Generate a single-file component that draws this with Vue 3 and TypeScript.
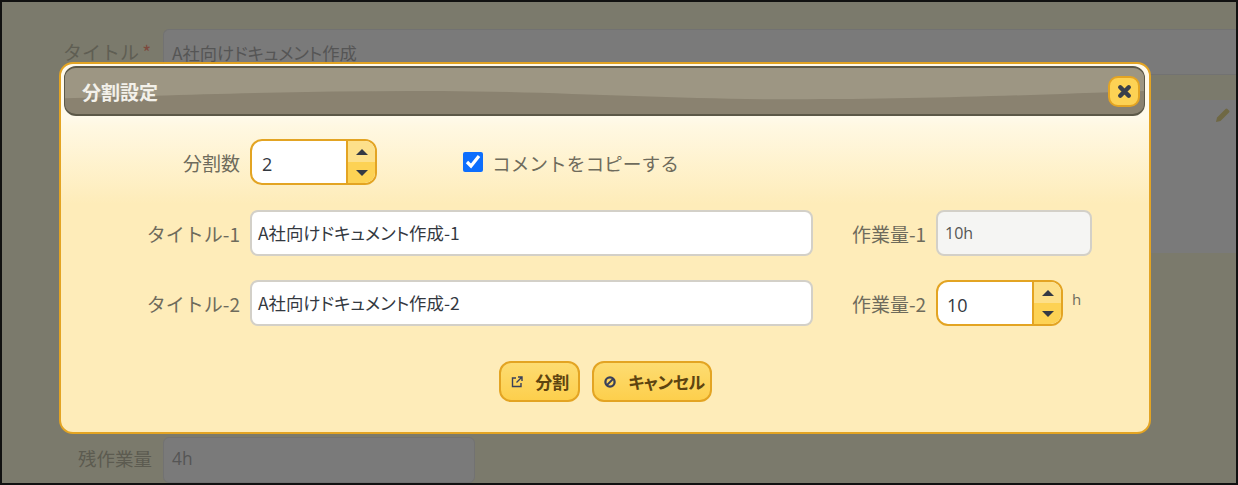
<script setup lang="ts">
const rows = [
  { title: 'タイトル-1', value: 'A社向けドキュメント作成-1', workLabel: '作業量-1' },
  { title: 'タイトル-2', value: 'A社向けドキュメント作成-2', workLabel: '作業量-2' },
]
</script>

<template>
  <div class="page">
    <div class="backdrop">
      <div class="bg-row first">
        <span class="bg-label">タイトル<em>*</em></span>
        <div class="bg-input">A社向けドキュメント作成</div>
      </div>
      <div class="bg-area">
        <svg class="pencil" viewBox="0 0 14 14" width="14" height="14"><path d="M0 14L1 9.500 9.500 1a1.400 1.400 0 0 1 2 0L13 2.500a1.400 1.400 0 0 1 0 2L4.500 13z" fill="#6f6844" /></svg>
      </div>
      <div class="bg-spacer"></div>
      <div class="bg-row last">
        <span class="bg-label rest">残作業量</span>
        <div class="bg-input small">4h</div>
      </div>
    </div>

    <section class="modal">
      <header class="head">
        <svg class="gloss" viewBox="0 0 1081 50" preserveAspectRatio="none"><path d="M0 33C100 30 250 24 377 25S600 34 728 34 950 30 1081 25V0H0Z" fill="#9d9683" /></svg>
        <span class="head-title">分割設定</span>
        <button class="close" type="button" aria-label="閉じる">
          <svg viewBox="0 0 16 16" width="17" height="17"><path d="M4 4l8 8M12 4l-8 8" stroke="#3a3f4b" stroke-width="4.200" stroke-linecap="round" /></svg>
        </button>
      </header>
      <div class="body">
        <div class="row top">
          <label class="lab">分割数</label>
          <div class="spin">
            <span class="spin-val first-val">2</span>
            <span class="arrows">
              <i class="up"></i>
              <i class="down"></i>
            </span>
          </div>
          <label class="check">
            <input type="checkbox" checked />
            <span>コメントをコピーする</span>
          </label>
        </div>
        <div v-for="(r, i) in rows" :key="r.title" class="row">
          <label class="lab">{{ r.title }}</label>
          <div class="field">{{ r.value }}</div>
          <label class="lab2">{{ r.workLabel }}</label>
          <div v-if="i === 0" class="field readonly">10h</div>
          <template v-else>
            <div class="spin">
              <span class="spin-val">10</span>
              <span class="arrows">
                <i class="up"></i>
                <i class="down"></i>
              </span>
            </div>
            <span class="unit">h</span>
          </template>
        </div>
        <div class="actions">
          <button class="btn" type="button">
            <svg viewBox="0 0 14 14" width="14" height="14" fill="none" stroke="#39405a" stroke-width="1.400"><path d="M6 3H2.500v8.500H11V8M8 2h4v4M12 2L6.500 7.500" /></svg>
            <span>分割</span>
          </button>
          <button class="btn cancel" type="button">
            <svg viewBox="0 0 14 14" width="14" height="14" fill="none" stroke="#39405a" stroke-width="2.300"><circle cx="7" cy="7" r="4.600" /><path d="M4 10l6-6" stroke-width="1.800" /></svg>
            <span>キャンセル</span>
          </button>
        </div>
      </div>
    </section>
  </div>
</template>

<style>
html, body { margin: 0; padding: 0; background: #000; }
</style>

<style scoped>
* { box-sizing: border-box; }
.page {
  position: relative;
  width: 1238px;
  height: 485px;
  overflow: hidden;
  border: 2px solid #111;
  background: #7b7a6c;
  font-family: "Noto Sans CJK JP", "Open Sans", sans-serif;
}
.backdrop {
  display: flex;
  flex-direction: column;
  height: 100%;
}
.bg-row { display: flex; align-items: flex-start; flex: none; }
.bg-row.first { padding-top: 27px; height: 72px; }
.bg-label {
  width: 161px;
  padding: 12px 12px 0 0;
  text-align: right;
  color: #5f5e53;
  font-size: 19px;
  line-height: 22px;
  white-space: nowrap;
}
.bg-label em { color: #7d4a3e; font-style: normal; margin-left: 3px; }
.bg-label.rest { color: #5c5b50; padding: 10px 11px 0 0; font-size: 18.500px; }
.bg-input {
  flex: 1;
  height: 46px;
  padding: 0 8px;
  background: #7a7a7a;
  border: 1px solid #727272;
  border-right: 0;
  border-radius: 6px 0 0 6px;
  color: #555;
  font-size: 17.300px;
  line-height: 45px;
  font-feature-settings: "palt";
}
.bg-input.small {
  flex: none;
  width: 312px;
  height: 46px;
  border-right: 1px solid #727272;
  border-radius: 6px;
  line-height: 42px;
  font-family: "Open Sans", sans-serif;
}
.bg-area {
  flex: none;
  height: 153px;
  margin: 26px 0 0 161px;
  background: #7a7a7a;
  position: relative;
}
.pencil { position: absolute; right: 6px; top: 8px; }
.bg-spacer { flex: 1; }
.bg-row.last { height: 46px; }

.modal {
  position: absolute;
  left: 57px;
  top: 60px;
  width: 1092px;
  height: 372px;
  border: 2px solid #e3a423;
  border-radius: 14px;
  background: linear-gradient(#fffaeb 52px, #fff8e2 62px, #feecb9 140px);
  padding: 2px 4px 2px 3px;
}
.head {
  position: relative;
  display: flex;
  align-items: center;
  justify-content: space-between;
  height: 50px;
  padding: 0 4px 0 17px;
  border: 1px solid #5c5848;
  border-top-width: 2px;
  border-bottom-width: 2px;
  border-radius: 12px;
  background: #8a8270;
  overflow: hidden;
}
.gloss {
  position: absolute;
  inset: 0;
  width: 100%;
  height: 100%;
}
.head-title {
  position: relative;
  font-size: 19px;
  font-weight: 700;
  font-feature-settings: "palt";
  color: #f3f1ea;
}
.close {
  position: relative;
  display: flex;
  align-items: center;
  justify-content: center;
  width: 32px;
  height: 31px;
  padding: 0;
  border: 2px solid #e3a423;
  border-radius: 10px;
  background: #fdd254;
}
.body { padding: 23px 0 0; }
.row {
  display: flex;
  align-items: center;
  height: 46px;
  margin-bottom: 24px;
}
.row.top { margin-bottom: 25px; }
.lab {
  width: 176px;
  text-align: right;
  margin-right: 10px;
  color: #6e6b5c;
  font-size: 19px;
  white-space: nowrap;
}
.lab2 {
  margin-left: 39px;
  width: 74px;
  margin-right: 10px;
  color: #6e6b5c;
  font-size: 19px;
  white-space: nowrap;
}
.field {
  width: 563px;
  height: 46px;
  padding: 0 6px;
  background: #fff;
  border: 2px solid #d3d0c8;
  border-radius: 8px;
  color: #33383f;
  font-size: 17.400px;
  font-feature-settings: "palt";
  line-height: 42px;
  white-space: nowrap;
}
.field.readonly {
  width: 156px;
  background: #f5f5f3;
  color: #555;
  padding: 0 7px;
  font-size: 16px;
  font-family: "Open Sans", sans-serif;
}
.spin {
  display: flex;
  width: 127px;
  height: 46px;
  background: #fff;
  border: 2px solid #e3a423;
  border-radius: 12px;
  overflow: hidden;
}
.spin-val {
  flex: 1;
  padding-left: 9px;
  color: #33383f;
  font-size: 18px;
  line-height: 46px;
  font-family: "Open Sans", sans-serif;
}
.spin-val.first-val { padding-left: 10px; }
.arrows {
  display: flex;
  flex-direction: column;
  width: 29px;
  border-left: 2px solid #e3a423;
  background: linear-gradient(#fde08a 50%, #fdd254 50%);
}
.arrows i {
  flex: 1;
  display: flex;
  align-items: center;
  justify-content: center;
}
.arrows i::before {
  content: "";
  border-left: 6px solid transparent;
  border-right: 6px solid transparent;
}
.arrows .up::before { border-bottom: 6px solid #343944; }
.arrows .down::before { border-top: 6px solid #343944; }
.check {
  display: flex;
  align-items: center;
  margin-left: 86px;
  gap: 9px;
  color: #6e6b5c;
  font-size: 18.700px;
}
.check input {
  width: 20px;
  height: 20px;
  margin: 0;
  accent-color: #0d6efd;
}
.unit {
  margin: -8px 0 0 9px;
  color: #6e6b5c;
  font-size: 15px;
  font-family: "Open Sans", sans-serif;
}
.actions {
  display: flex;
  justify-content: center;
  gap: 12px;
  margin-top: 35px;
  padding-left: 2px;
}
.btn {
  display: flex;
  align-items: center;
  gap: 11px;
  height: 41px;
  padding: 0 9px;
  border: 2px solid #e3a423;
  border-radius: 12px;
  background: linear-gradient(#fddc72, #fdcf4c);
  color: #5e4410;
  font-family: inherit;
  font-feature-settings: "palt";
  font-size: 17px;
  font-weight: 700;
  white-space: nowrap;
}
.btn.cancel { padding-right: 5px; letter-spacing: -0.400px; }
</style>
